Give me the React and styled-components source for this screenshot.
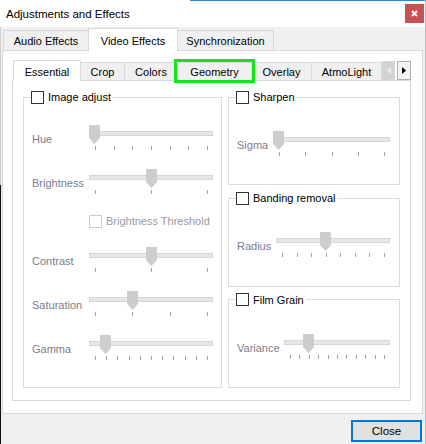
import React from "react";
import styled, { createGlobalStyle } from "styled-components";

const GlobalStyle = createGlobalStyle`
  html, body { margin: 0; padding: 0; background: #f0f0f0; }
  * { box-sizing: border-box; }
  body {
    font-family: "Segoe UI", "Liberation Sans", Arial, sans-serif;
    font-size: 11px;
    color: #000;
  }
`;

const Window = styled.div`
  width: 426px;
  height: 444px;
  display: flex;
  flex-direction: column;
  overflow: hidden;
  border-right: 1px solid #bdbdbd;
  background:
    linear-gradient(#d0d0d0, #d0d0d0) 0 0 / 1px 185px no-repeat,
    linear-gradient(#111, #111) 0 185px / 1px 100% no-repeat,
    #f0f0f0;
`;

const TitleBar = styled.div`
  flex: none;
  height: 27px;
  display: flex;
  align-items: center;
  justify-content: space-between;
  padding: 0 1px 0 6px;
  background:
    linear-gradient(to right, transparent 190px, #2b87d3 190px) 0 0 / 100% 1px no-repeat,
    #fff;
`;

const Title = styled.span`
  font-size: 11.5px;
  color: #000;
  padding-top: 1px;
`;

const CloseX = styled.div`
  width: 19px;
  height: 19px;
  background: #c75050;
  display: flex;
  align-items: center;
  justify-content: center;
`;

const TabBar = styled.div`
  flex: none;
  display: flex;
  align-items: flex-end;
  height: ${(p) => p.$h}px;
  margin-top: ${(p) => p.$mt || 0}px;
  padding-left: ${(p) => p.$pl}px;
`;

const Tab = styled.div`
  position: relative;
  z-index: ${(p) => (p.$active ? 1 : 0)};
  width: ${(p) => p.$w}px;
  height: ${(p) => (p.$active ? p.$ha : p.$hi)}px;
  margin-bottom: ${(p) => (p.$active ? -1 : 0)}px;
  margin-left: -1px;
  padding-top: 1px;
  border: 1px solid #d9d9d9;
  border-bottom: none;
  background: ${(p) => (p.$active ? "#fff" : "#f0f0f0")};
  display: flex;
  align-items: center;
  justify-content: center;
  white-space: nowrap;
  &:first-child { margin-left: 0; }
  ${(p) =>
    p.$highlight &&
    `
    z-index: 2;
    outline: 3px solid #14e614;
  `}
`;

const OuterPanel = styled.div`
  flex: none;
  height: 364px;
  margin: 0 2px;
  background: #fff;
  border: 1px solid #d9d9d9;
  padding: 9px 11px 12px 9px;
  display: flex;
  flex-direction: column;
`;

const ScrollButtons = styled.div`
  margin-left: auto;
  align-self: flex-start;
  margin-top: 1px;
  display: flex;
  gap: 2px;
`;

const ScrollBtn = styled.div`
  width: ${(p) => (p.$disabled ? 13 : 14)}px;
  height: 19px;
  background: ${(p) => (p.$disabled ? "#d3d3d3" : "#f4f4f4")};
  border: 1px solid ${(p) => (p.$disabled ? "#d3d3d3" : "#adadad")};
  display: flex;
  align-items: center;
  justify-content: center;
`;

const Pane = styled.div`
  flex: 1;
  min-height: 0;
  background: #fff;
  border: 1px solid #d9d9d9;
  padding: 9px 10px 12px 10px;
  display: grid;
  grid-template-columns: 199px 172px;
  column-gap: 6px;
`;

const RightColumn = styled.div`
  display: flex;
  flex-direction: column;
  gap: 6px;
  min-height: 0;
`;

const Group = styled.fieldset`
  margin: 0;
  padding: 0;
  min-width: 0;
  min-height: 0;
  border: 1px solid #dcdcdc;
  display: flex;
  flex-direction: column;
  flex: 1;
`;

const Legend = styled.legend`
  margin-left: 7px;
  padding: 0 2px 0 0;
  height: 14px;
  display: flex;
  align-items: center;
  gap: 4px;
  color: #000;
`;

const Box = styled.span`
  flex: none;
  width: 13px;
  height: 13px;
  background: #fff;
  border: 1px solid ${(p) => (p.$disabled ? "#cccccc" : "#333333")};
`;

const LeftBody = styled.div`
  padding: 21px 8px 0 8px;
  display: flex;
  flex-direction: column;
  gap: 18px;
`;

const RightBody = styled.div`
  flex: 1;
  display: flex;
  flex-direction: column;
  justify-content: center;
  padding: 0 9px 0 8px;
`;

const Row = styled.div`
  display: grid;
  grid-template-columns: ${(p) => p.$labelW}px 1fr;
  align-items: center;
  height: ${(p) => p.$h || 26}px;
`;

const Label = styled.span`
  color: ${(p) => (p.$light ? "#9a9aa2" : "#7c7c8c")};
  white-space: nowrap;
  padding-top: ${(p) => (p.$light ? 0 : 2)}px;
`;

const CheckLine = styled.div`
  display: flex;
  align-items: center;
  gap: 4px;
`;

const SliderBox = styled.div`
  position: relative;
  height: 26px;
  display: flex;
  flex-direction: column;
`;

const Track = styled.div`
  margin-top: 6px;
  height: 5px;
  background: #e7e7e7;
  border: 1px solid #d6d6d6;
`;

const Ticks = styled.div`
  margin-top: 10px;
  height: 4px;
  display: flex;
  justify-content: space-between;
  padding: 0 5px 0 6px;
`;

const Tick = styled.span`
  width: 1px;
  height: 4px;
  background: #a3a39b;
`;

const Thumb = styled.svg`
  position: absolute;
  top: 0;
  width: 11px;
  height: 19px;
`;

const BottomBar = styled.div`
  flex: 1;
  display: flex;
  justify-content: flex-end;
  align-items: flex-start;
  padding: 6px 3px 0 0;
`;

const Button = styled.div`
  width: 71px;
  height: 22px;
  background: #e1e1e1;
  border: 2px solid #0078d7;
  display: flex;
  align-items: center;
  justify-content: center;
  color: #000;
  font-size: 11.5px;
`;

function Slider({ value, ticks }) {
  return (
    <SliderBox>
      <Track />
      <Ticks>
        {Array.from({ length: ticks }).map((_, i) => (
          <Tick key={i} />
        ))}
      </Ticks>
      <Thumb
        viewBox="0 0 11 19"
        style={{ left: `calc(${value} * (100% - 11px))` }}
      >
        <polygon points="0,0 11,0 11,13 5.5,19 0,13" fill="#cdcdcd" />
      </Thumb>
    </SliderBox>
  );
}

function SliderRow({ label, value, ticks, labelW }) {
  return (
    <Row $labelW={labelW}>
      <Label>{label}</Label>
      <Slider value={value} ticks={ticks} />
    </Row>
  );
}

function CheckLegend({ children }) {
  return (
    <Legend>
      <Box />
      <span>{children}</span>
    </Legend>
  );
}

const outerTabs = [
  { t: "Audio Effects", w: 86 },
  { t: "Video Effects", w: 90, active: true },
  { t: "Synchronization", w: 97 },
];

const innerTabs = [
  { t: "Essential", w: 68, active: true },
  { t: "Crop", w: 45 },
  { t: "Colors", w: 54 },
  { t: "Geometry", w: 75, highlight: true },
  { t: "Overlay", w: 61 },
  { t: "AtmoLight", w: 71 },
];

export default function App() {
  return (
    <>
      <GlobalStyle />
      <Window>
        <TitleBar>
          <Title>Adjustments and Effects</Title>
          <CloseX>
            <svg width="7" height="7" viewBox="0 0 7 7">
              <path d="M1 1L6 6M6 1L1 6" stroke="#fff" strokeWidth="1.8" />
            </svg>
          </CloseX>
        </TitleBar>

        <TabBar $h={22} $mt={1} $pl={3}>
          {outerTabs.map((tab) => (
            <Tab key={tab.t} $w={tab.w} $active={tab.active} $ha={23} $hi={20}>
              {tab.t}
            </Tab>
          ))}
        </TabBar>

        <OuterPanel>
          <TabBar $h={20} $pl={1}>
            {innerTabs.map((tab) => (
              <Tab
                key={tab.t}
                $w={tab.w}
                $active={tab.active}
                $highlight={tab.highlight}
                $ha={21}
                $hi={18}
              >
                {tab.t}
              </Tab>
            ))}
            <ScrollButtons>
              <ScrollBtn $disabled>
                <svg width="4" height="7" viewBox="0 0 4 7">
                  <polygon points="4,0 4,7 0,3.5" fill="#eeeeee" />
                </svg>
              </ScrollBtn>
              <ScrollBtn>
                <svg width="4" height="7" viewBox="0 0 4 7">
                  <polygon points="0,0 0,7 4,3.5" fill="#000" />
                </svg>
              </ScrollBtn>
            </ScrollButtons>
          </TabBar>

          <Pane>
            <Group>
              <CheckLegend>Image adjust</CheckLegend>
              <LeftBody>
                <SliderRow labelW={57} label="Hue" value={0} ticks={7} />
                <SliderRow labelW={57} label="Brightness" value={0.5} ticks={3} />
                <Row $labelW={57} $h={16}>
                  <span />
                  <CheckLine>
                    <Box $disabled />
                    <Label $light>Brightness Threshold</Label>
                  </CheckLine>
                </Row>
                <SliderRow labelW={57} label="Contrast" value={0.5} ticks={3} />
                <SliderRow labelW={57} label="Saturation" value={1 / 3} ticks={4} />
                <SliderRow labelW={57} label="Gamma" value={0.1} ticks={11} />
              </LeftBody>
            </Group>

            <RightColumn>
              <Group>
                <CheckLegend>Sharpen</CheckLegend>
                <RightBody>
                  <SliderRow labelW={36} label="Sigma" value={0} ticks={5} />
                </RightBody>
              </Group>
              <Group>
                <CheckLegend>Banding removal</CheckLegend>
                <RightBody>
                  <SliderRow labelW={39} label="Radius" value={3 / 7} ticks={8} />
                </RightBody>
              </Group>
              <Group>
                <CheckLegend>Film Grain</CheckLegend>
                <RightBody>
                  <SliderRow labelW={47} label="Variance" value={0.2} ticks={11} />
                </RightBody>
              </Group>
            </RightColumn>
          </Pane>
        </OuterPanel>

        <BottomBar>
          <Button>Close</Button>
        </BottomBar>
      </Window>
    </>
  );
}
